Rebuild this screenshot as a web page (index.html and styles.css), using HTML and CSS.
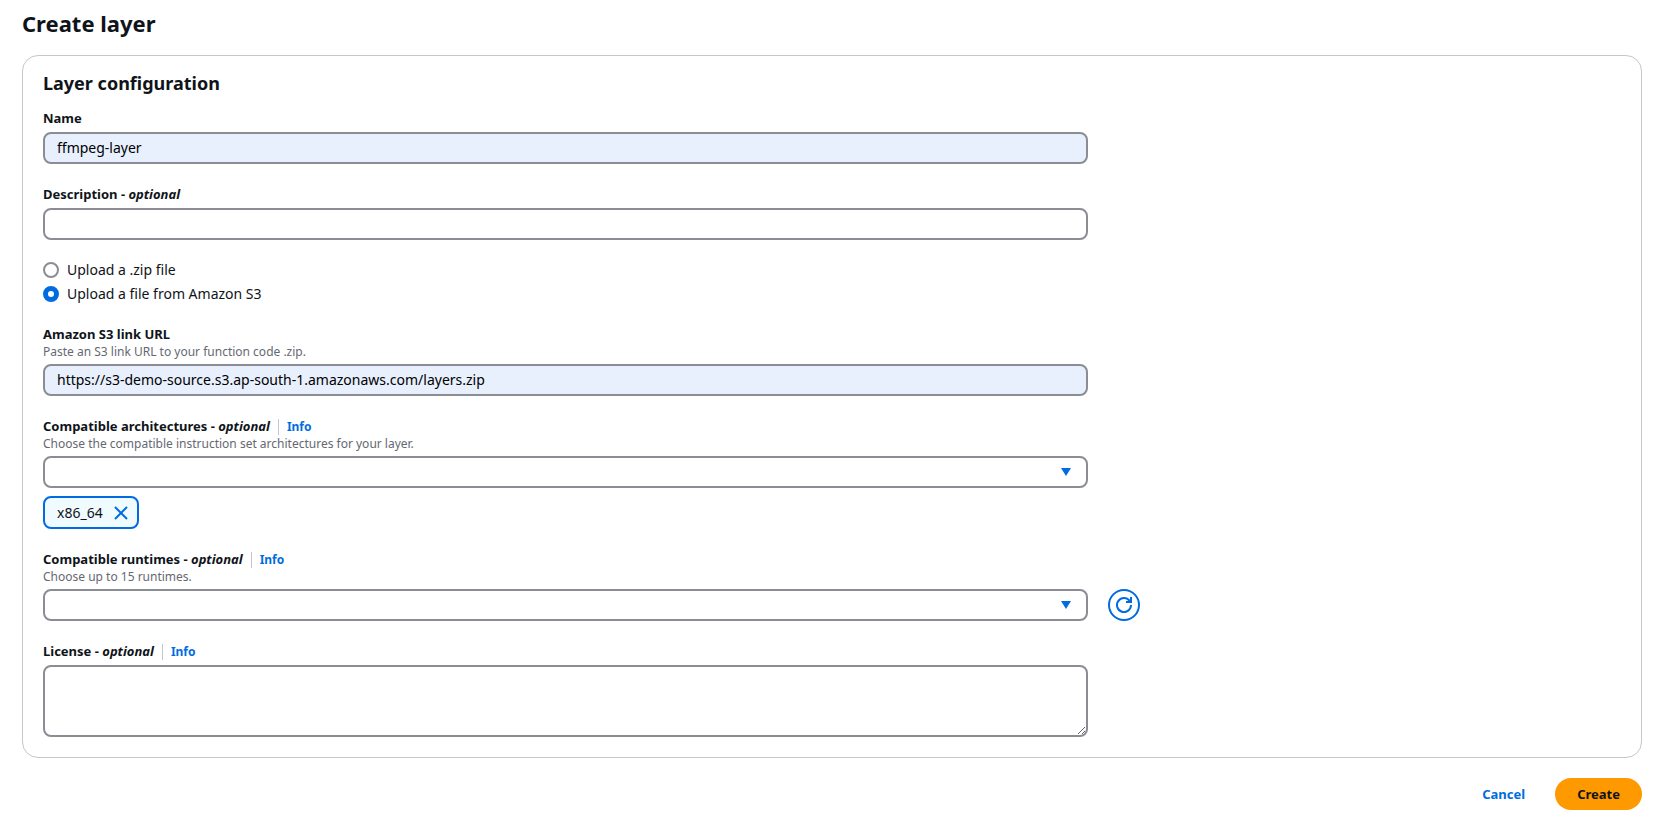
FILE: index.html
```html
<!DOCTYPE html>
<html lang="en">
<head>
<meta charset="utf-8">
<title>Create layer</title>
<link rel="stylesheet" href="styles.css">
</head>
<body>
<main class="page">
  <h1 class="page-title">Create layer</h1>
  <form class="form">
    <section class="panel">
      <h2 class="panel-title">Layer configuration</h2>
      <div class="fields">
        <div class="field">
          <div class="label-row"><label for="name">Name</label></div>
          <div class="grid"><input class="control filled" id="name" type="text" value="ffmpeg-layer"></div>
        </div>
        <div class="field">
          <div class="label-row"><label for="description">Description - <em>optional</em></label></div>
          <div class="grid"><input class="control" id="description" type="text"></div>
        </div>
        <div class="radios">
          <label class="radio"><input type="radio" name="source"><span>Upload a .zip file</span></label>
          <label class="radio"><input type="radio" name="source" checked><span>Upload a file from Amazon S3</span></label>
        </div>
        <div class="field">
          <div class="label-row"><label for="url">Amazon S3 link URL</label></div>
          <p class="hint">Paste an S3 link URL to your function code .zip.</p>
          <div class="grid"><input class="control filled" id="url" type="text" value="https://s3-demo-source.s3.ap-south-1.amazonaws.com/layers.zip"></div>
        </div>
        <div class="field">
          <div class="label-row"><label for="arch">Compatible architectures - <em>optional</em></label><a class="info" href="#">Info</a></div>
          <p class="hint">Choose the compatible instruction set architectures for your layer.</p>
          <div class="grid">
            <div class="select">
              <select class="control" id="arch"><option></option></select>
              <svg class="caret" viewBox="0 0 16 16" aria-hidden="true"><path d="M3 4h10l-5 8z"/></svg>
            </div>
          </div>
          <div class="tags">
            <span class="tag">x86_64
              <button class="dismiss" type="button" aria-label="Remove x86_64"><svg viewBox="0 0 16 16"><path d="M2 2l12 12M14 2L2 14"/></svg></button>
            </span>
          </div>
        </div>
        <div class="field">
          <div class="label-row"><label for="runtimes">Compatible runtimes - <em>optional</em></label><a class="info" href="#">Info</a></div>
          <p class="hint">Choose up to 15 runtimes.</p>
          <div class="grid">
            <div class="select">
              <select class="control" id="runtimes"><option></option></select>
              <svg class="caret" viewBox="0 0 16 16" aria-hidden="true"><path d="M3 4h10l-5 8z"/></svg>
            </div>
            <button class="refresh" type="button" aria-label="Refresh runtimes"><svg viewBox="0 0 16 16"><path d="M10 5h5V0"/><path d="M15 8a7 7 0 1 1-1.5-4.3L15 5"/></svg></button>
          </div>
        </div>
        <div class="field">
          <div class="label-row"><label for="license">License - <em>optional</em></label><a class="info" href="#">Info</a></div>
          <div class="grid"><textarea class="control area" id="license"></textarea></div>
        </div>
      </div>
    </section>
    <div class="actions">
      <button class="button link" type="button">Cancel</button>
      <button class="button primary" type="submit">Create</button>
    </div>
  </form>
</main>
</body>
</html>
```
FILE: styles.css
```css
* { box-sizing: border-box; }
body {
  margin: 0;
  background: #fff;
  color: #0f141a;
  font: 14px/20px "Noto Sans", "Open Sans", sans-serif;
}
h1, h2, p { margin: 0; }
.page { padding: 8px 27px 18px 22px; }
.page-title { font-size: 22px; line-height: 30px; font-weight: 700; }
.form { margin-top: 17px; }
.panel {
  border: 1px solid #c6c6cd;
  border-radius: 16px;
  padding: 15px 20px 20px;
}
.panel-title { font-size: 18px; line-height: 24px; font-weight: 700; }
.fields { display: flex; flex-direction: column; gap: 20px; margin-top: 13px; }
.label-row { display: flex; align-items: baseline; font-weight: 700; font-size: 13px; }
.info {
  margin-left: 8px;
  padding: 0 8px;
  border-left: 1px solid #c6c6cd;
  font-size: 12px;
  line-height: 16px;
  color: #006ce0;
  text-decoration: none;
}
.hint { font-size: 12px; line-height: 16px; color: #656871; }
.grid {
  display: grid;
  grid-template-columns: repeat(12, minmax(0, 1fr));
  column-gap: 20px;
  margin-top: 4px;
}
.grid > * { grid-column: span 8; }
.control {
  display: block;
  width: 100%;
  height: 32px;
  margin: 0;
  padding: 3px 12px 5px;
  border: 2px solid #8c8c94;
  border-radius: 8px;
  background: #fff;
  color: #0f141a;
  font: inherit;
  appearance: none;
}
.filled { background: #e8f0fe; color: #000; }
.area { height: 72px; resize: vertical; }
.radios { display: flex; flex-direction: column; gap: 4px; }
.radio { display: flex; align-items: center; gap: 8px; }
.radio input {
  appearance: none;
  width: 16px;
  height: 16px;
  margin: 0;
  border: 2px solid #8c8c94;
  border-radius: 50%;
  background: #fff;
}
.radio input:checked { border: 5px solid #006ce0; }
.select { position: relative; }
.caret { position: absolute; right: 14px; top: 8px; width: 16px; height: 16px; fill: #006ce0; pointer-events: none; }
.tags { display: flex; margin-top: 8px; }
.tag {
  display: flex;
  align-items: center;
  gap: 10px;
  min-height: 33px;
  padding: 0 8px 0 12px;
  border: 2px solid #006ce0;
  border-radius: 8px;
  background: #f0fbff;
}
.dismiss { display: flex; padding: 0; border: 0; background: none; }
.dismiss svg { width: 16px; height: 16px; }
.dismiss path, .refresh path { fill: none; stroke: #006ce0; stroke-width: 2; }
.grid > .refresh {
  grid-column: span 1;
  display: flex;
  align-items: center;
  justify-content: center;
  width: 32px;
  height: 32px;
  padding: 0;
  border: 2px solid #006ce0;
  border-radius: 50%;
  background: #fff;
}
.refresh svg { width: 16px; height: 16px; }
.actions { display: flex; justify-content: flex-end; gap: 8px; margin-top: 20px; }
.button {
  height: 32px;
  padding: 0 22px;
  border: 0;
  border-radius: 16px;
  background: none;
  font: inherit;
  font-size: 13px;
  font-weight: 700;
}
.link { color: #006ce0; }
.primary { background: #ff9900; color: #0f141a; }
```
